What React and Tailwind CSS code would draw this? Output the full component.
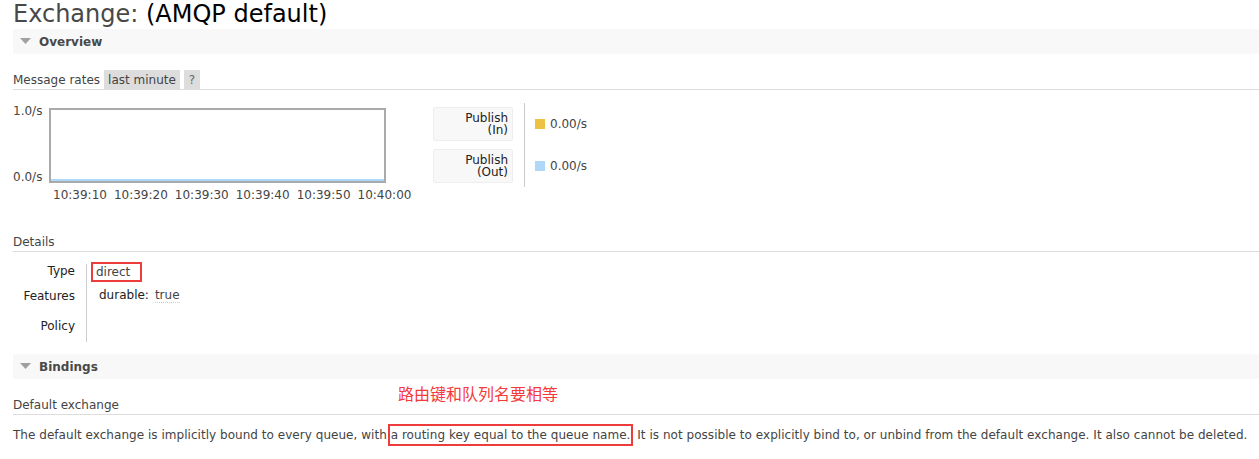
import React from "react";

const font = { fontFamily: '"DejaVu Sans", Verdana, sans-serif' };

function SectionBar({ title }) {
  return (
    <div className="ml-[13px] h-[25px] bg-[#f8f8f8] flex items-center">
      <svg width="11" height="7" viewBox="0 0 11 7" className="ml-[7px] mr-[8px]">
        <polygon points="0,0 11,0 5.5,6" fill="#a0a0a0" />
      </svg>
      <span className="font-bold text-[12px] text-[#484848]">{title}</span>
    </div>
  );
}

export default function App() {
  const times = ["10:39:10", "10:39:20", "10:39:30", "10:39:40", "10:39:50", "10:40:00"];
  return (
    <div className="w-[1259px] h-[459px] bg-white overflow-hidden text-[#444] text-[12px]" style={font}>
      <h1 className="ml-[13px] h-[29px] text-[24px] leading-[28px] font-normal text-[#484848]">
        Exchange: <span className="text-black">(AMQP default)</span>
      </h1>
      <SectionBar title="Overview" />

      <div className="ml-[13px] mt-[15px] h-[21px] border-b border-[#ddd] flex items-stretch pt-[1px]">
        <span className="leading-[20px] pr-[4px]">Message rates</span>
        <span className="bg-[#ddd] px-[4px] leading-[20px]">last minute</span>
        <span className="bg-[#ddd] px-[5px] ml-[4px] leading-[20px] text-[#666]">?</span>
      </div>

      <div className="flex ml-[13px] mt-[18px] h-[100px]">
        <div className="flex flex-col w-[400px] shrink-0">
          <div className="flex">
            <div className="w-[36px] flex flex-col justify-between h-[80px] -mt-[4px]">
              <span className="leading-[14px]">1.0/s</span>
              <span className="leading-[14px]">0.0/s</span>
            </div>
            <div className="w-[337px] h-[75px] border-2 border-[#aaa] flex flex-col justify-end">
              <div className="h-[2px] bg-[#afd8f8]" />
            </div>
          </div>
          <div className="flex ml-[40px] mt-[4px] leading-[14px] whitespace-nowrap">
            {times.map((t) => (
              <span key={t} className="mr-[7px]">{t}</span>
            ))}
          </div>
        </div>

        <div className="ml-[20px] flex flex-col gap-[8px] -mt-[1px]">
          {[["Publish", "(In)"], ["Publish", "(Out)"]].map(([a, b]) => (
            <div key={b} className="w-[80px] h-[34px] bg-[#f8f8f8] border border-[#eee] rounded-[2px] flex flex-col items-end justify-center pr-[4px] leading-[12px] text-[#222]">
              <span>{a}</span>
              <span>{b}</span>
            </div>
          ))}
        </div>
        <div className="ml-[11px] w-px bg-[#ccc] h-[84px] -mt-[5px]" />
        <div className="ml-[10px] flex flex-col -mt-[1px]">
          <div className="h-[34px] flex items-center">
            <span className="w-[10px] h-[10px] bg-[#edc240] mr-[5px]" />
            <span>0.00/s</span>
          </div>
          <div className="h-[34px] mt-[8px] flex items-center">
            <span className="w-[10px] h-[10px] bg-[#afd8f8] mr-[5px]" />
            <span>0.00/s</span>
          </div>
        </div>
      </div>

      <div className="ml-[13px] mt-[26px] h-[18px] border-b border-[#ddd] leading-[16px]">Details</div>

      <div className="flex ml-[13px] mt-[13px]">
        <div className="flex flex-col items-end w-[62px] text-[#222] leading-[14px] -mt-[1px]">
          <span className="h-[25px]">Type</span>
          <span className="h-[30px]">Features</span>
          <span className="h-[22px]">Policy</span>
        </div>
        <div className="ml-[11px] w-px bg-[#ccc] h-[78px] -mt-[1px]" />
        <div className="flex flex-col ml-[4px]">
          <div className="h-[25px] -mt-[3px]">
            <span className="inline-block border-2 border-[#ee3b3b] px-[3px] h-[20px] w-[51px] leading-[16px] text-[#444]">direct</span>
          </div>
          <div className="flex items-start ml-[8px] -mt-[1px]">
            <span className="text-[#222]">durable:</span>
            <span className="ml-[6px] mt-[2px] border-b border-dotted border-[#ccc] leading-[14px]">true</span>
          </div>
        </div>
      </div>

      <div className="mt-[12px]">
        <SectionBar title="Bindings" />
      </div>

      <div className="ml-[13px] h-[36px] border-b border-[#ddd] relative">
        <span className="absolute left-[385px] top-[4px] text-[16px] leading-[20px] text-[#f43a3a]" style={{ fontFamily: '"Noto Sans CJK SC", sans-serif' }}>路由键和队列名要相等</span>
        <span className="absolute left-0 bottom-[1px] leading-[16px]">Default exchange</span>
      </div>

      <p className="ml-[13px] mt-[10px] leading-[20px] whitespace-nowrap tracking-[0.035px]">
        The default exchange is implicitly bound to every queue, with{" "}
        <span className="border-2 border-[#ee3b3b] -ml-[3px] px-[1px] pt-[2px] pb-[2px]">a routing key equal to the queue name.</span>{" "}
        It is not possible to explicitly bind to, or unbind from the default exchange. It also cannot be deleted.
      </p>
    </div>
  );
}
